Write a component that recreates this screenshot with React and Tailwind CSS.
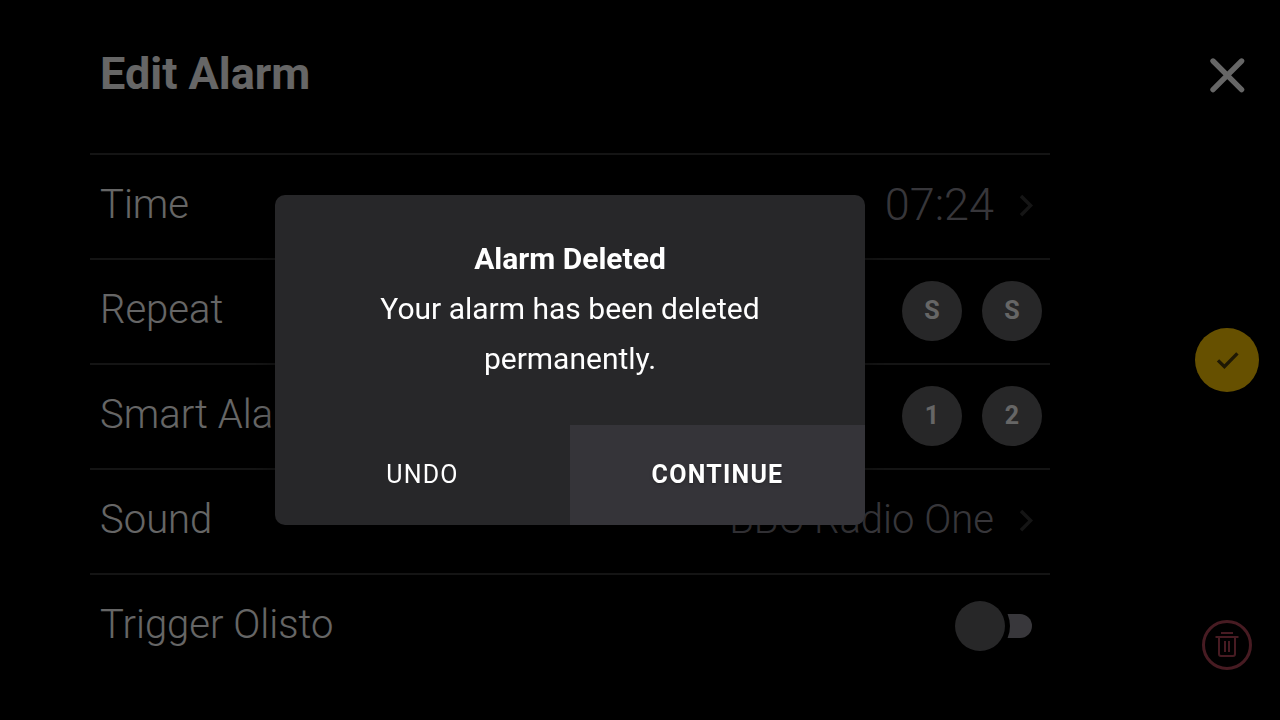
import React, { useState } from 'react';
import clsx from 'clsx';

const ChevronIcon = () => (
  <svg className="h-6 w-4" viewBox="0 0 16 24" fill="none" stroke="#363636" strokeWidth="3.4">
    <path d="M3 2 L12.6 11.6 L3 21.2" />
  </svg>
);

const CloseIcon = () => (
  <svg className="h-10 w-10" viewBox="0 0 40 40" fill="none" stroke="currentColor" strokeWidth="5.4" strokeLinecap="round">
    <path d="M6 6 L34.6 34.6 M34.6 6 L6 34.6" />
  </svg>
);

const CheckIcon = () => (
  <svg className="h-6 w-6" viewBox="0 0 24 24" fill="none" stroke="currentColor" strokeWidth="3.4">
    <path d="M3 12.4 L9.4 18.6 L22.4 5.4" />
  </svg>
);

const TrashIcon = () => (
  <svg className="h-7 w-7" viewBox="0 0 28 28" fill="none" stroke="currentColor" strokeWidth="2">
    <path d="M8 2 H20 M2.5 6 H25.5 M6 6 V23 Q6 25 8 25 H20 Q22 25 22 23 V6 M12 10 V21 M16 10 V21" />
  </svg>
);

const Row = ({ label, children }) => (
  <li className="flex h-[105px] items-center justify-between border-t-2 border-[#323232] px-2 pb-px">
    <span className="pb-0.5 pl-0.5">{label}</span>
    {children}
  </li>
);

const LinkValue = ({ value, large }) => (
  <button type="button" className="flex items-center gap-6 pr-2 text-[#8a8892]">
    <span className={clsx('pb-0.5', large && 'text-[45px]')}>{value}</span>
    <ChevronIcon />
  </button>
);

const Bubbles = ({ items }) => (
  <div className="flex gap-5">
    {items.map((item, i) => (
      <button
        key={i}
        type="button"
        className="flex h-15 w-15 items-center justify-center rounded-full bg-[#616164] text-[25px] font-bold"
      >
        {item}
      </button>
    ))}
  </div>
);

const Toggle = ({ id, checked, onChange }) => (
  <label htmlFor={id} className="flex cursor-pointer items-center pr-2.5">
    <input id={id} type="checkbox" role="switch" aria-label="Trigger Olisto" className="sr-only" checked={checked} onChange={onChange} />
    <span className={clsx('z-10 h-[50px] w-[50px] rounded-full bg-[#616164] ring-5 ring-black', checked && 'translate-x-6')} />
    <span className="-ml-6 h-6 w-[51px] rounded-full bg-[#8c8a93]" />
  </label>
);

const Dialog = ({ onClose }) => (
  <div className="fixed inset-0 z-20 flex items-center justify-center bg-black/60 pr-[140px]">
    <div
      role="alertdialog"
      aria-labelledby="dialog-title"
      className="w-[590px] overflow-hidden rounded-[10px] bg-[#272729] text-center text-[30px] leading-[50px] font-normal text-white shadow-[0_0_20px_rgba(0,0,0,0.5)]"
    >
      <div className="px-20 pt-[39px] pb-[41px]">
        <h2 id="dialog-title" className="font-bold">Alarm Deleted</h2>
        <p>Your alarm has been deleted permanently.</p>
      </div>
      <div className="grid h-[100px] grid-cols-2 text-[25px] tracking-wider">
        <button type="button" onClick={onClose}>UNDO</button>
        <button type="button" onClick={onClose} className="bg-[#353439] font-bold text-shadow-md">
          CONTINUE
        </button>
      </div>
    </div>
  </div>
);

const App = () => {
  const [open, setOpen] = useState(true);
  const [trigger, setTrigger] = useState(false);

  return (
    <div className="flex h-screen overflow-hidden bg-black font-['Roboto',sans-serif] text-[40px] font-light text-white">
      <main className="flex-1 pr-[124px] pl-[90px]">
        <header className="flex h-[153px] items-center px-2.5 pb-1.5">
          <h1 className="text-[45px] font-bold">Edit Alarm</h1>
        </header>
        <ul>
          <Row label="Time">
            <LinkValue value="07:24" large />
          </Row>
          <Row label="Repeat">
            <Bubbles items={['S', 'S']} />
          </Row>
          <Row label="Smart Alarm">
            <Bubbles items={['1', '2']} />
          </Row>
          <Row label="Sound">
            <LinkValue value="BBC Radio One" />
          </Row>
          <Row label="Trigger Olisto">
            <Toggle id="trigger" checked={trigger} onChange={() => setTrigger(!trigger)} />
          </Row>
        </ul>
      </main>

      <aside className="flex w-[106px] flex-col items-center justify-between py-[50px]">
        <button type="button" aria-label="Close" className="flex h-[50px] w-[50px] items-center justify-center">
          <CloseIcon />
        </button>
        <button
          type="button"
          aria-label="Save"
          className="flex h-16 w-16 items-center justify-center rounded-full bg-[#ffc800] text-[#4b3c0a]"
        >
          <CheckIcon />
        </button>
        <button
          type="button"
          aria-label="Delete"
          onClick={() => setOpen(true)}
          className="flex h-[50px] w-[50px] items-center justify-center rounded-full border-3 border-[#b14455] text-[#b14455]"
        >
          <TrashIcon />
        </button>
      </aside>

      {open && <Dialog onClose={() => setOpen(false)} />}
    </div>
  );
};

export default App;
